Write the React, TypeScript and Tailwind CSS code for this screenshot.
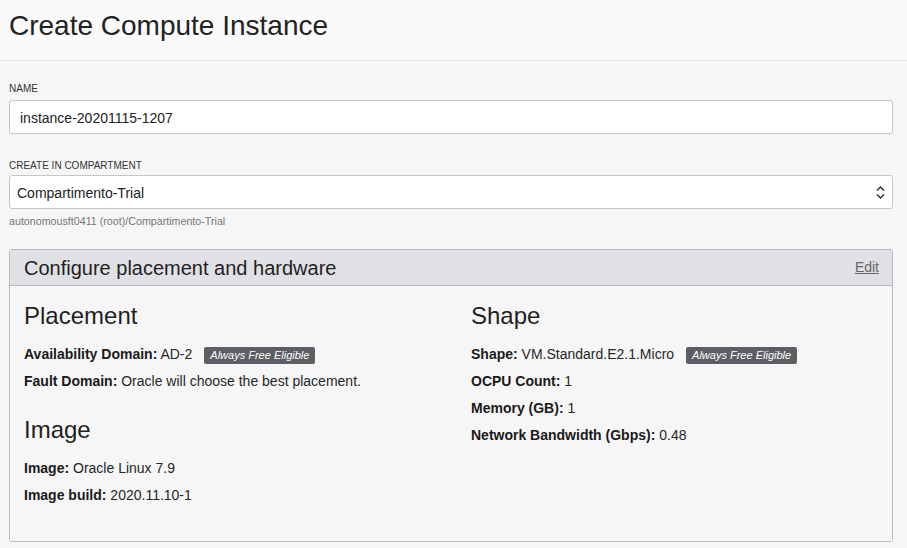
import React from "react";

const Badge = () => (
  <span className="ml-[12px] inline-block rounded-[2px] bg-[#5b5e62] px-[6px] text-[11px] italic leading-[17px] text-white">
    Always Free Eligible
  </span>
);

const Row = ({ label, value, badge }: { label: string; value: string; badge?: boolean }) => (
  <div className="text-[14px] leading-[27px] text-[#262626]">
    <span className="font-bold text-[#1a1a1a]">{label}</span> {value}
    {badge ? <Badge /> : null}
  </div>
);

export default function App() {
  return (
    <div className="min-h-[548px] bg-[#f6f6f6] font-['Liberation_Sans',Arial,sans-serif] text-[#222]">
      <div className="h-[61px] border-b border-[#e2e2e2] bg-[#fafafa] pl-[9px] pt-[10px]">
        <h1 className="text-[28px] leading-[32px] text-[#222]">Create Compute Instance</h1>
      </div>
      <div className="px-[9px] pr-[14px]">
        <div className="mt-[22px] text-[10px] leading-[12px] text-[#333]">NAME</div>
        <div className="mt-[5px] flex h-[34px] items-center rounded-[3px] border border-[#c6c6c6] bg-white pl-[10px] pt-[2px] text-[14px] text-[#222]">
          instance-20201115-1207
        </div>
        <div className="mt-[26px] text-[10px] leading-[12px] text-[#333]">CREATE IN COMPARTMENT</div>
        <div className="mt-[3px] flex h-[34px] items-center justify-between rounded-[3px] border border-[#c6c6c6] bg-white pl-[7px] pr-[7px] text-[14px] text-[#222]">
          <span className="pt-[2px]">Compartimento-Trial</span>
          <svg width="9" height="15" viewBox="0 0 9 15" fill="none" stroke="#333" strokeWidth="1.5">
            <path d="M1 5.5 L4.5 2 L8 5.5" />
            <path d="M1 9.5 L4.5 13 L8 9.5" />
          </svg>
        </div>
        <div className="mt-[6px] text-[10.7px] leading-[12px] text-[#777]">
          autonomousft0411 (root)/Compartimento-Trial
        </div>
        <div className="mt-[22px] overflow-hidden rounded-[3px] border border-[#b7babf]">
          <div className="flex h-[36px] items-center justify-between border-b border-[#b7babf] bg-[#dfe1e4] pl-[14px] pr-[13px]">
            <span className="text-[20px] leading-[24px] text-[#1f1f1f]">Configure placement and hardware</span>
            <span className="text-[14px] text-[#666] underline">Edit</span>
          </div>
          <div className="grid grid-cols-2 gap-x-[40px] bg-[#f6f6f6] px-[14px] pb-[32px] pt-[16px]">
            <div>
              <h2 className="mb-[11px] text-[24px] leading-[28px] text-[#1f1f1f]">Placement</h2>
              <Row label="Availability Domain:" value="AD-2" badge />
              <Row label="Fault Domain:" value="Oracle will choose the best placement." />
              <h2 className="mb-[11px] mt-[21px] text-[24px] leading-[28px] text-[#1f1f1f]">Image</h2>
              <Row label="Image:" value="Oracle Linux 7.9" />
              <Row label="Image build:" value="2020.11.10-1" />
            </div>
            <div>
              <h2 className="mb-[11px] text-[24px] leading-[28px] text-[#1f1f1f]">Shape</h2>
              <Row label="Shape:" value="VM.Standard.E2.1.Micro" badge />
              <Row label="OCPU Count:" value="1" />
              <Row label="Memory (GB):" value="1" />
              <Row label="Network Bandwidth (Gbps):" value="0.48" />
            </div>
          </div>
        </div>
      </div>
    </div>
  );
}
